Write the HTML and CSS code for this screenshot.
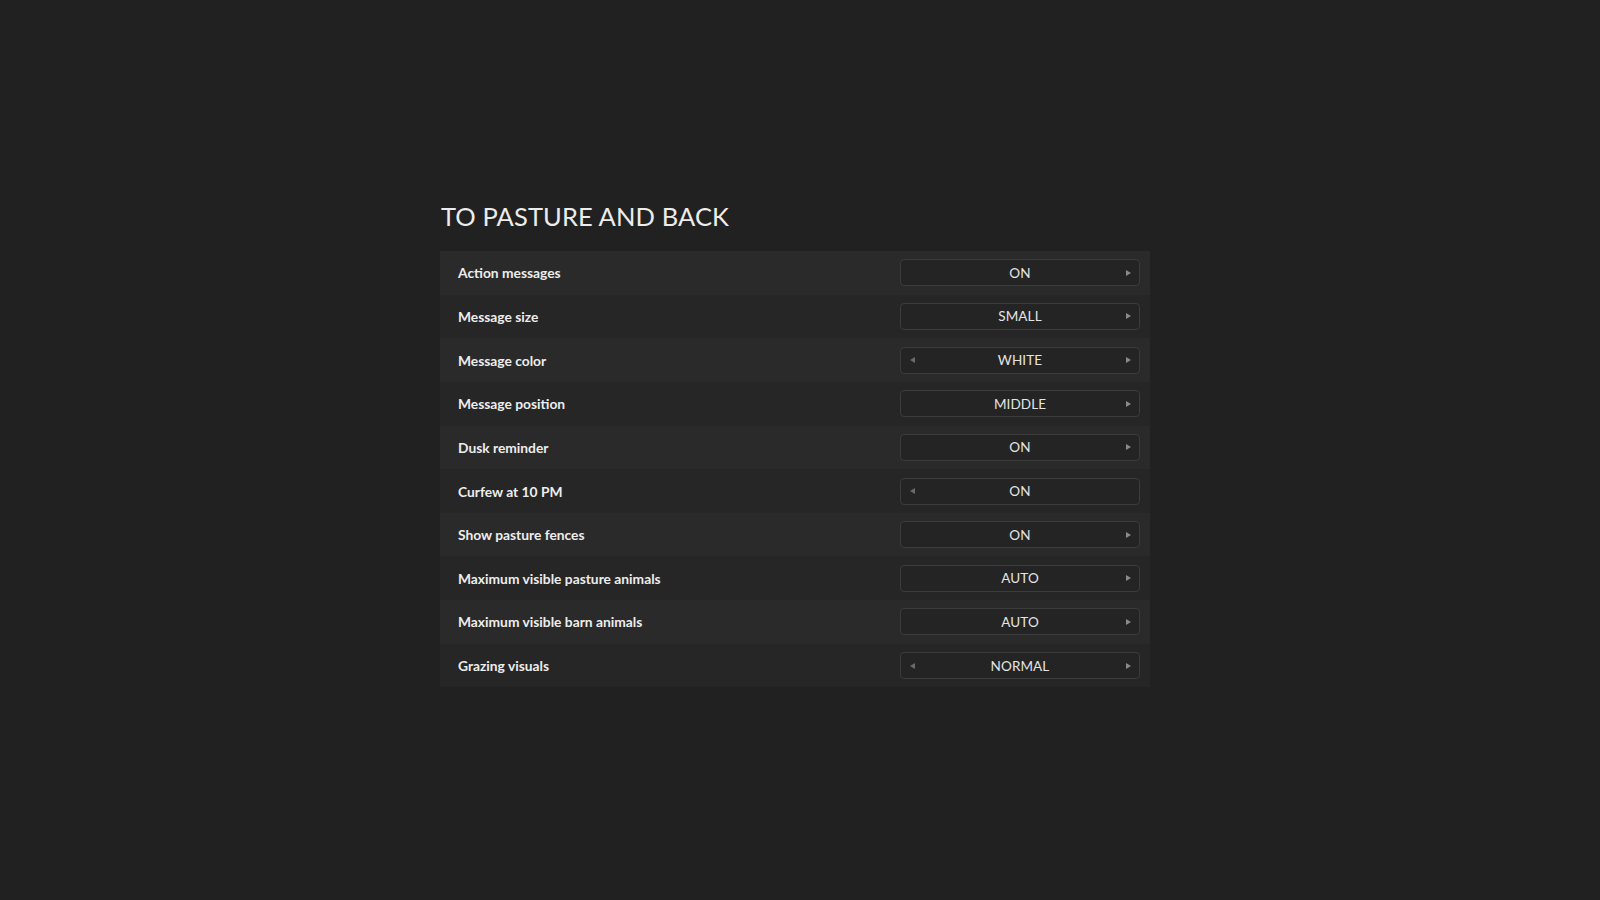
FILE: index.html
```html
<!DOCTYPE html>
<html>
<head>
<meta charset="utf-8">
<link rel="stylesheet" href="styles.css">
</head>
<body>
<main class="page">
  <section class="settings">
    <h1 class="title">TO PASTURE AND BACK</h1>
    <div class="list">
      <div class="row"><span class="label">Action messages</span><div class="select"><span class="arr"></span><span class="val">ON</span><span class="arr right"></span></div></div>
      <div class="row"><span class="label">Message size</span><div class="select"><span class="arr"></span><span class="val">SMALL</span><span class="arr right"></span></div></div>
      <div class="row"><span class="label">Message color</span><div class="select"><span class="arr left"></span><span class="val">WHITE</span><span class="arr right"></span></div></div>
      <div class="row"><span class="label">Message position</span><div class="select"><span class="arr"></span><span class="val">MIDDLE</span><span class="arr right"></span></div></div>
      <div class="row"><span class="label">Dusk reminder</span><div class="select"><span class="arr"></span><span class="val">ON</span><span class="arr right"></span></div></div>
      <div class="row"><span class="label">Curfew at 10 PM</span><div class="select"><span class="arr left"></span><span class="val">ON</span><span class="arr"></span></div></div>
      <div class="row"><span class="label">Show pasture fences</span><div class="select"><span class="arr"></span><span class="val">ON</span><span class="arr right"></span></div></div>
      <div class="row"><span class="label">Maximum visible pasture animals</span><div class="select"><span class="arr"></span><span class="val">AUTO</span><span class="arr right"></span></div></div>
      <div class="row"><span class="label">Maximum visible barn animals</span><div class="select"><span class="arr"></span><span class="val">AUTO</span><span class="arr right"></span></div></div>
      <div class="row"><span class="label">Grazing visuals</span><div class="select"><span class="arr left"></span><span class="val">NORMAL</span><span class="arr right"></span></div></div>
    </div>
  </section>
</main>
</body>
</html>
```

FILE: styles.css
```css
html, body {
  margin: 0;
  padding: 0;
  background: #212121;
  height: 100%;
}
body {
  font-family: "Lato", "Noto Sans", sans-serif;
  color: #e6e6e6;
}
.page {
  display: flex;
  justify-content: flex-start;
  padding: 196px 0 0 440px;
}
.settings {
  width: 710px;
}
.title {
  margin: 0 0 15px 1px;
  font-size: 25.5px;
  font-weight: 400;
  line-height: 40px;
  color: #ececec;
  letter-spacing: 0.1px;
}
.list {
  display: flex;
  flex-direction: column;
}
.row {
  height: 43.65px;
  display: flex;
  align-items: center;
  justify-content: space-between;
  padding: 0 10px 0 18px;
  background: #262626;
}
.row:nth-child(odd) {
  background: #2a2a2a;
}
.label {
  font-size: 13.8px;
  font-weight: 700;
  color: #ededed;
}
.select {
  width: 240px;
  height: 27px;
  box-sizing: border-box;
  border: 1px solid #3c3c3c;
  border-radius: 4px;
  background: #242424;
  display: grid;
  grid-template-columns: 14px 1fr 14px;
  align-items: center;
  padding: 0 8px;
}
.val {
  font-size: 13.5px;
  color: #e4e4e4;
  letter-spacing: 0.1px;
  text-align: center;
}
.arr {
  display: block;
  width: 0;
  height: 0;
}
.arr.right {
  justify-self: end;
  border-top: 3.5px solid transparent;
  border-bottom: 3.5px solid transparent;
  border-left: 5px solid #8a8a8a;
}
.arr.left {
  justify-self: start;
  margin-left: 1px;
  border-top: 3.5px solid transparent;
  border-bottom: 3.5px solid transparent;
  border-right: 5px solid #6a6a6a;
}
```
